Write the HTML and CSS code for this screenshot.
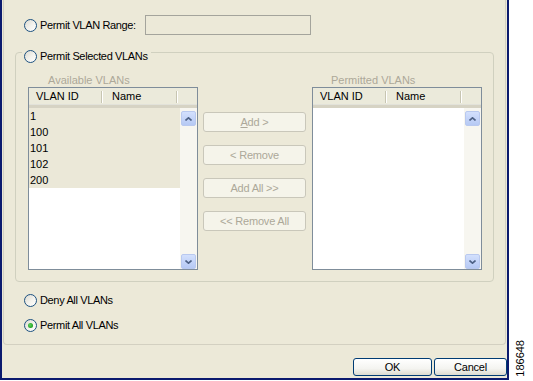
FILE: index.html
```html
<!DOCTYPE html>
<html lang="en">
<head>
    <meta charset="UTF-8">
    <title>Edit Allowed VLANs</title>
    <link rel="stylesheet" href="styles.css">
</head>
<body>

<div class="screen">
    <div class="window">
        <div class="panel">

            <div class="option option-range">
                <span class="radio"></span>
                <span class="option-label range-label">Permit VLAN Range:</span>
                <span class="textbox"></span>
            </div>

            <div class="group">
                <div class="group-title">
                    <span class="radio"></span>
                    <span class="option-label">Permit Selected VLANs</span>
                </div>

                <div class="lists">
                    <div class="list-col">
                        <div class="list-caption">Available VLANs</div>
                        <div class="listview">
                            <div class="lv-header">
                                <div class="lv-col lv-id">VLAN ID</div>
                                <div class="lv-col lv-name">Name</div>
                            </div>
                            <div class="lv-body">
                                <div class="lv-rows">
                                    <div class="lv-row">1</div>
                                    <div class="lv-row">100</div>
                                    <div class="lv-row">101</div>
                                    <div class="lv-row">102</div>
                                    <div class="lv-row">200</div>
                                </div>
                                <div class="scrollbar">
                                    <span class="sb-btn"><svg width="7" height="4" viewBox="0 0 7 4"><polyline points="0.5,3.5 3.5,0.8 6.5,3.5" fill="none" stroke="#4d6185" stroke-width="1.6"/></svg></span>
                                    <span class="sb-btn"><svg width="7" height="4" viewBox="0 0 7 4"><polyline points="0.5,0.5 3.5,3.2 6.5,0.5" fill="none" stroke="#4d6185" stroke-width="1.6"/></svg></span>
                                </div>
                            </div>
                        </div>
                    </div>

                    <div class="actions">
                        <button class="xp-btn" disabled><u>A</u>dd &gt;</button>
                        <button class="xp-btn" disabled>&lt; Remove</button>
                        <button class="xp-btn" disabled>Add All &gt;&gt;</button>
                        <button class="xp-btn" disabled>&lt;&lt; Remove All</button>
                    </div>

                    <div class="list-col list-col-right">
                        <div class="list-caption">Permitted VLANs</div>
                        <div class="listview">
                            <div class="lv-header">
                                <div class="lv-col lv-id">VLAN ID</div>
                                <div class="lv-col lv-name">Name</div>
                            </div>
                            <div class="lv-body lv-empty">
                                <div class="lv-rows"></div>
                                <div class="scrollbar">
                                    <span class="sb-btn"><svg width="7" height="4" viewBox="0 0 7 4"><polyline points="0.5,3.5 3.5,0.8 6.5,3.5" fill="none" stroke="#4d6185" stroke-width="1.6"/></svg></span>
                                    <span class="sb-btn"><svg width="7" height="4" viewBox="0 0 7 4"><polyline points="0.5,0.5 3.5,3.2 6.5,0.5" fill="none" stroke="#4d6185" stroke-width="1.6"/></svg></span>
                                </div>
                            </div>
                        </div>
                    </div>
                </div>
            </div>

            <div class="option option-bottom">
                <span class="radio"></span>
                <span class="option-label">Deny All VLANs</span>
            </div>
            <div class="option option-bottom">
                <span class="radio checked"></span>
                <span class="option-label">Permit All VLANs</span>
            </div>
        </div>

        <div class="footer">
            <button class="xp-btn dlg-btn ok-btn">OK</button>
            <button class="xp-btn dlg-btn cancel-btn">Cancel</button>
        </div>
    </div>

    <div class="figno">186648</div>
</div>

</body>
</html>
```

FILE: styles.css
```css
body {
    margin: 0;
    padding: 0;
    background: #fff;
    font-family: "Liberation Sans", Arial, sans-serif;
    font-size: 11px;
    color: #000;
    overflow: hidden;
}

.screen {
    display: flex;
    height: 381px;
}

.window {
    width: 509px;
    height: 380px;
    box-sizing: border-box;
    background: #ece9d8;
    border-left: 2px solid #0b1a6e;
    border-right: 2px solid #0b1a6e;
    border-bottom: 2px solid #0b1a6e;
    display: flex;
    flex-direction: column;
}

.panel {
    margin: 0 1px;
    border: 1px solid #d3d0c1;
    border-top: none;
    border-radius: 0 0 4px 4px;
    padding-bottom: 12px;
}

/* radio options */
.option {
    display: flex;
    align-items: center;
    padding-left: 20px;
}

.option-label {
    margin-left: 3px;
    letter-spacing: -0.35px;
    line-height: 13px;
    white-space: nowrap;
}

.option-range {
    margin-top: 15px;
    height: 20px;
}

.range-label {
    width: 105px;
}

.option-bottom {
    margin-top: 12px;
    height: 13px;
}

.radio {
    width: 11px;
    height: 11px;
    border: 1px solid #1c5180;
    border-radius: 50%;
    background: linear-gradient(135deg, #dcdad0 0%, #f4f3ee 55%, #fff 100%);
    display: flex;
    align-items: center;
    justify-content: center;
    flex-shrink: 0;
}

.radio.checked::after {
    content: "";
    width: 5px;
    height: 5px;
    border-radius: 50%;
    background: radial-gradient(circle at 40% 40%, #5fd35f, #21a121 70%);
}

.textbox {
    width: 164px;
    height: 18px;
    border: 1px solid #a4a49c;
    background: #ece9d8;
}

/* group box */
.group {
    margin: 17px 11px 0;
    border: 1px solid #d0d0bf;
    border-radius: 4px;
    padding-bottom: 11px;
}

.group-title {
    display: flex;
    align-items: center;
    width: max-content;
    margin: -3px 0 0 6px;
    padding: 0 3px 0 2px;
    background: #ece9d8;
    height: 13px;
}

.lists {
    display: flex;
    padding-left: 12px;
    margin-top: 11px;
}

.list-col {
    width: 170px;
}

.list-col-right {
    margin-left: 6px;
}

.list-caption {
    height: 13px;
    line-height: 13px;
    padding-left: 20px;
    color: #aca899;
}

.list-col-right .list-caption {
    padding-left: 19px;
}

.listview {
    height: 183px;
    box-sizing: border-box;
    border: 1px solid #7f8d9a;
    background: #fff;
    display: flex;
    flex-direction: column;
}

.lv-header {
    display: flex;
    height: 20px;
    box-sizing: border-box;
    background: #ebeadb;
    border-bottom: 3px solid #d6d3c4;
    box-shadow: inset 0 -1px 0 #e2e2da;
}

.lv-col {
    line-height: 16px;
    position: relative;
}

.lv-col::after {
    content: "";
    position: absolute;
    right: 0;
    top: 3px;
    bottom: 2px;
    width: 1px;
    background: #c7c5b2;
    box-shadow: 1px 0 0 #fff;
}

.lv-id {
    width: 73px;
    padding-left: 7px;
    box-sizing: border-box;
}

.lv-name {
    width: 75px;
    padding-left: 10px;
    box-sizing: border-box;
}

.lv-body {
    flex: 1;
    display: flex;
}

.lv-rows {
    flex: 1;
}

.lv-row {
    height: 16px;
    line-height: 16px;
    padding-left: 1px;
    background: #ebe8d8;
}

.scrollbar {
    width: 17px;
    background: #f7f6f0;
    display: flex;
    flex-direction: column;
    justify-content: space-between;
    padding: 3px 0 0;
    box-sizing: border-box;
}

.sb-btn {
    height: 13px;
    margin: 0 1px;
    border: 1px solid #b9c9ef;
    border-radius: 2px;
    background: linear-gradient(#d3e0fd, #b6c9f4);
    display: flex;
    align-items: center;
    justify-content: center;
}

/* action buttons */
.actions {
    width: 103px;
    margin-left: 5px;
    padding-top: 38px;
    display: flex;
    flex-direction: column;
    gap: 13px;
}

.xp-btn {
    font-family: "Liberation Sans", Arial, sans-serif;
    font-size: 11px;
    letter-spacing: -0.2px;
    height: 20px;
    padding: 0;
    border: 1px solid #c9c7ba;
    border-radius: 3px;
    background: #f5f4ea;
    color: #aca899;
}

.xp-btn u {
    text-decoration-thickness: 1px;
}

/* dialog footer */
.footer {
    flex: 1;
    display: flex;
    justify-content: flex-end;
    align-items: flex-start;
    gap: 2px;
    padding: 13px 0 0;
}

.dlg-btn {
    height: 18px;
    color: #000;
    border: 1px solid #003c74;
    background: linear-gradient(#fff 0%, #f4f4f0 60%, #dcdad0 100%);
}

.ok-btn {
    width: 79px;
}

.cancel-btn {
    width: 73px;
}

.figno {
    align-self: flex-end;
    margin: 0 0 4px 6px;
    writing-mode: vertical-rl;
    transform: rotate(180deg);
    line-height: 11px;
    font-size: 11px;
}
```
